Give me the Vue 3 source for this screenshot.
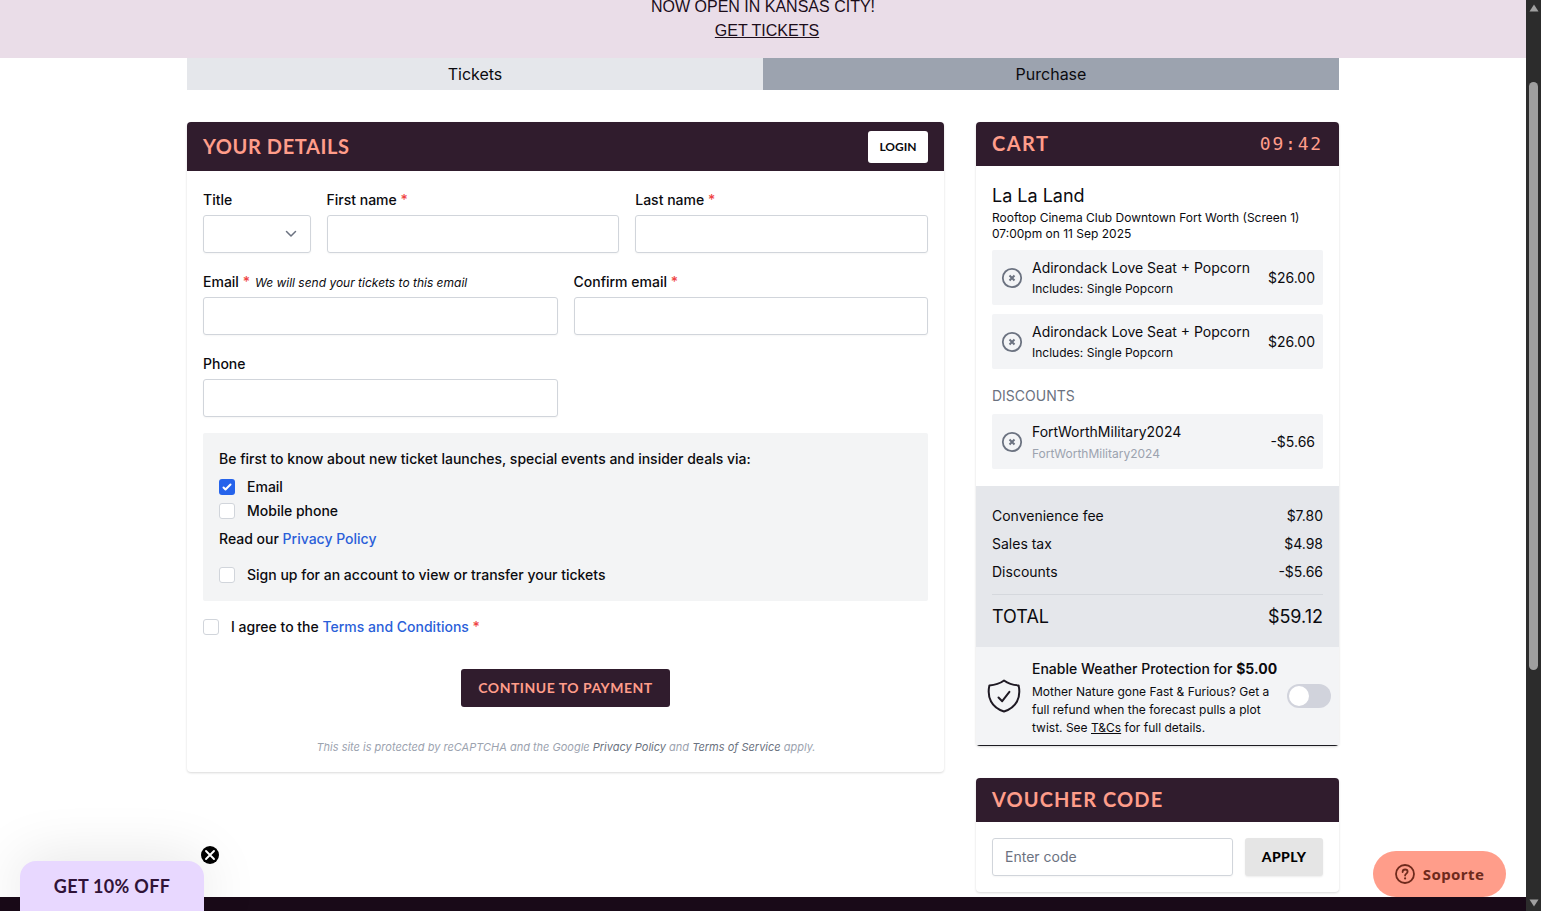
<template>
  <div class="window">
    <div class="page">
      <header class="banner">
        <span>NOW OPEN IN KANSAS CITY!</span>
        <a href="#">GET TICKETS</a>
      </header>

      <main class="container">
        <nav class="steps">
          <div class="step">Tickets</div>
          <div class="step active">Purchase</div>
        </nav>

        <div class="columns">
          <section class="card details">
            <div class="card-header details-header">
              <h2 class="heading-details">YOUR DETAILS</h2>
              <button class="btn-login">LOGIN</button>
            </div>

            <form class="form" @submit.prevent>
              <div class="fields">
                <div v-for="field in fields" :key="field.id" class="field" :class="field.size">
                  <label :for="field.id">
                    {{ field.label }}
                    <span v-if="field.required" class="required">*</span>
                    <em v-if="field.hint">{{ field.hint }}</em>
                  </label>
                  <div v-if="field.id === 'title'" :id="field.id" class="input select">
                    <svg width="12" height="8" viewBox="0 0 12 8" fill="none" stroke="#6b7280" stroke-width="1.5" stroke-linecap="round" stroke-linejoin="round">
                      <path d="M1.5 1.5 6 6l4.5-4.5" />
                    </svg>
                  </div>
                  <input v-else :id="field.id" v-model="field.value" class="input" type="text" />
                </div>
              </div>

              <div class="consent">
                <p>Be first to know about new ticket launches, special events and insider deals via:</p>
                <label class="check">
                  <span class="box checked">
                    <svg width="16" height="16" viewBox="0 0 16 16" fill="#fff">
                      <path d="M12.207 4.793a1 1 0 0 1 0 1.414l-5 5a1 1 0 0 1-1.414 0l-2-2a1 1 0 0 1 1.414-1.414L6.5 9.086l4.293-4.293a1 1 0 0 1 1.414 0z" />
                    </svg>
                  </span>
                  Email
                </label>
                <label class="check"><span class="box"></span>Mobile phone</label>
                <p class="policy">Read our <a href="#">Privacy Policy</a></p>
                <label class="check"><span class="box"></span>Sign up for an account to view or transfer your tickets</label>
              </div>

              <label class="check terms">
                <span class="box"></span>
                <span>I agree to the <a href="#">Terms and Conditions</a> <span class="required">*</span></span>
              </label>

              <button class="btn-continue">CONTINUE TO PAYMENT</button>

              <p class="recaptcha">
                This site is protected by reCAPTCHA and the Google <a href="#">Privacy Policy</a> and
                <a href="#">Terms of Service</a> apply.
              </p>
            </form>
          </section>

          <aside class="sidebar">
            <section class="card cart">
              <div class="card-header">
                <h2 class="heading-cart">CART</h2>
                <span class="timer">09:42</span>
              </div>

              <div class="cart-body">
                <h3>La La Land</h3>
                <p class="venue">Rooftop Cinema Club Downtown Fort Worth (Screen 1)</p>
                <p class="venue">07:00pm on 11 Sep 2025</p>

                <template v-for="item in items" :key="item.id">
                  <h4 v-if="item.discount">DISCOUNTS</h4>
                  <div class="item" :class="{ discount: item.discount }">
                    <svg class="remove" width="22" height="22" viewBox="0 0 22 22" fill="none" stroke="#6b7280">
                      <circle cx="11" cy="11" r="9.2" stroke-width="1.8" />
                      <path d="m8.500 8.500 5 5m0-5-5 5" stroke-width="2" />
                    </svg>
                    <div class="item-text">
                      <span>{{ item.name }}</span>
                      <small>{{ item.note }}</small>
                    </div>
                    <span class="price">{{ item.price }}</span>
                  </div>
                </template>
              </div>

              <div class="summary">
                <div v-for="row in summary" :key="row.label" class="summary-row">
                  <span>{{ row.label }}</span>
                  <span>{{ row.value }}</span>
                </div>
                <div class="total">
                  <span>TOTAL</span>
                  <span>$59.12</span>
                </div>
              </div>

              <div class="weather">
                <svg class="shield" width="34" height="34" viewBox="0 0 34 34" fill="none" stroke="#1f1a24" stroke-width="2" stroke-linecap="round" stroke-linejoin="round">
                  <path d="M17 1.5c4.2 3.1 9 4.6 14.6 4.9C34.2 18.5 29.5 28.5 17 32.5 4.5 28.5-.2 18.5 2.4 6.4 8 6.1 12.8 4.600 17 1.500z" />
                  <path d="m11.500 18.500 3.700 3.700 7.200-9.400" />
                </svg>
                <div class="weather-text">
                  <span class="weather-title">Enable Weather Protection for <b>$5.00</b></span>
                  <p>Mother Nature gone Fast &amp; Furious? Get a full refund when the forecast pulls a plot twist. See <a href="#">T&amp;Cs</a> for full details.</p>
                </div>
                <button class="toggle" aria-label="Enable Weather Protection"><span></span></button>
              </div>
            </section>

            <section class="card voucher">
              <div class="card-header">
                <h2 class="heading-voucher">VOUCHER CODE</h2>
              </div>
              <div class="voucher-body">
                <input v-model="code" class="input" type="text" placeholder="Enter code" />
                <button class="btn-apply">APPLY</button>
              </div>
            </section>
          </aside>
        </div>
      </main>

      <footer class="footer"></footer>

      <div class="promo">GET 10% OFF</div>
      <button class="promo-close" aria-label="Close">
        <svg width="18" height="18" viewBox="0 0 18 18" fill="none">
          <circle cx="9" cy="9" r="9" fill="#000" />
          <path d="m5 5 8 8m0-8-8 8" stroke="#fff" stroke-width="1.9" stroke-linecap="round" />
        </svg>
      </button>

      <button class="support">
        <svg width="20" height="20" viewBox="0 0 20 20" fill="none" stroke="#6e2a1c" stroke-width="1.8" stroke-linecap="round">
          <circle cx="10" cy="10" r="9" />
          <path d="M7.600 8c0-1.500 1.100-2.500 2.500-2.500s2.500.9 2.500 2.200c0 1.800-2.500 2-2.500 3.900" />
          <path d="M10.100 14.300v.1" stroke-width="2.100" />
        </svg>
        Soporte
      </button>
    </div>

    <div class="scrollbar">
      <svg width="10" height="8" viewBox="0 0 10 8"><path d="M5 0.500 9.500 7.500h-9z" fill="#a0a0a0" /></svg>
      <div class="thumb"></div>
      <svg width="10" height="8" viewBox="0 0 10 8"><path d="M5 7.500 9.500.5h-9z" fill="#a0a0a0" /></svg>
    </div>
  </div>
</template>

<script setup>
import { ref } from 'vue'

const code = ref('')

const fields = ref([
  { id: 'title', label: 'Title', size: 'small', value: '' },
  { id: 'first-name', label: 'First name', size: 'medium', required: true, value: '' },
  { id: 'last-name', label: 'Last name', size: 'medium', required: true, value: '' },
  { id: 'email', label: 'Email', size: 'half', required: true, hint: 'We will send your tickets to this email', value: '' },
  { id: 'confirm-email', label: 'Confirm email', size: 'half', required: true, value: '' },
  { id: 'phone', label: 'Phone', size: 'half', value: '' }
])

const items = [
  { id: 1, name: 'Adirondack Love Seat + Popcorn', note: 'Includes: Single Popcorn', price: '$26.00' },
  { id: 2, name: 'Adirondack Love Seat + Popcorn', note: 'Includes: Single Popcorn', price: '$26.00' },
  { id: 3, name: 'FortWorthMilitary2024', note: 'FortWorthMilitary2024', price: '-$5.66', discount: true }
]

const summary = [
  { label: 'Convenience fee', value: '$7.80' },
  { label: 'Sales tax', value: '$4.98' },
  { label: 'Discounts', value: '-$5.66' }
]
</script>

<style>
body {
  margin: 0;
  overflow: hidden;
}
</style>

<style scoped>
.window {
  --plum: #301c2d;
  --coral: #ff9d8a;
  --link: #2b5fd9;

  display: flex;
  width: 1541px;
  height: 911px;
  overflow: hidden;
  font-family: Inter, sans-serif;
  font-size: 14px;
  line-height: 20px;
  color: #0b0b0f;
}

.window *,
.window *::before {
  box-sizing: border-box;
}

h2,
h3,
h4,
p {
  margin: 0;
  font-weight: 400;
}

button {
  border: none;
  padding: 0;
  cursor: pointer;
}

.page {
  position: relative;
  display: flex;
  flex-direction: column;
  width: 1526px;
  height: 911px;
  background: #fff;
  overflow: hidden;
}

.banner {
  display: flex;
  flex-direction: column;
  justify-content: flex-end;
  align-items: center;
  flex: none;
  height: 58px;
  padding-bottom: 15px;
  background: #eadde8;
  font: 16px/24px "Liberation Sans", sans-serif;
  color: #1c0d1a;
}

.banner a {
  margin-left: 8px;
  color: inherit;
  text-underline-offset: 1px;
}

.container {
  flex: 1;
  min-height: 0;
  width: 1152px;
  margin: 0 auto;
}

.steps {
  display: flex;
  height: 32px;
  font-size: 16px;
  line-height: 32px;
  text-align: center;
}

.step {
  flex: 1;
  background: #e5e7eb;
}

.step.active {
  background: #9ca3af;
}

.columns {
  display: flex;
  align-items: flex-start;
  gap: 32px;
  margin-top: 32px;
}

.card {
  border-radius: 4px;
  background: #fff;
  box-shadow: 0 1px 3px rgba(0, 0, 0, 0.08), 0 1px 2px rgba(0, 0, 0, 0.08);
  overflow: hidden;
}

.card-header {
  display: flex;
  align-items: center;
  justify-content: space-between;
  height: 44px;
  padding: 0 16px;
  background: var(--plum);
  color: var(--coral);
}

.card-header h2 {
  padding-bottom: 2px;
  font: 700 20px/26px Lato, sans-serif;
  letter-spacing: 1.5px;
}

.card-header .heading-details {
  letter-spacing: 0.6px;
}

.card-header .heading-voucher {
  letter-spacing: 1.1px;
}

.details {
  width: 757px;
  height: 650px;
}

.details-header {
  height: 49px;
}

.btn-login {
  width: 60px;
  height: 32px;
  border-radius: 3px;
  background: #fff;
  font: 700 12px/32px Lato, sans-serif;
  color: #0b0b0f;
}

.form {
  display: flex;
  flex-direction: column;
  padding: 19px 16px 0;
  font-weight: 500;
}

.fields {
  display: grid;
  grid-template-columns: repeat(12, 1fr);
  gap: 19px 16px;
}

.small {
  grid-column: span 2;
}

.medium {
  grid-column: span 5;
}

.half {
  grid-column: span 6;
}

.field label {
  display: block;
  height: 20px;
  margin-bottom: 5px;
}

.field em {
  margin-left: 1px;
  padding-left: 4px;
  font-size: 12px;
  font-weight: 450;
}

.required {
  color: #ef4444;
}

.input {
  display: block;
  width: 100%;
  height: 38px;
  padding: 0 12px;
  border: 1px solid #d1d5db;
  border-radius: 3px;
  background: #fff;
  box-shadow: 0 1px 2px rgba(0, 0, 0, 0.04);
  font: 14px/20px Inter, sans-serif;
  outline: none;
}

.input::placeholder {
  color: #6b7280;
}

.select {
  display: flex;
  align-items: center;
  justify-content: flex-end;
  padding-right: 13px;
}

.consent {
  height: 168px;
  margin-top: 16px;
  padding: 16px;
  background: #f3f4f5;
  border-radius: 2px;
}

.consent p {
  font-weight: 500;
}

.check {
  display: flex;
  align-items: center;
  gap: 12px;
  height: 24px;
}

.consent p + .check {
  margin-top: 6px;
}

.consent .policy {
  margin-top: 6px;
}

.consent .policy + .check {
  margin-top: 14px;
}

.box {
  display: flex;
  width: 16px;
  height: 16px;
  border: 1px solid #d1d5db;
  border-radius: 3px;
  background: #fff;
}

.box.checked {
  border: none;
  background: #2563eb;
}

.form a {
  color: var(--link);
  text-decoration: none;
}

.terms {
  margin-top: 14px;
}

.btn-continue {
  align-self: center;
  width: 209px;
  height: 38px;
  margin-top: 30px;
  border-radius: 3px;
  background: var(--plum);
  color: var(--coral);
  font: 700 14px/38px Lato, sans-serif;
  letter-spacing: 0.5px;
}

.form .recaptcha {
  margin-top: 30px;
  padding-left: 1px;
  font-size: 11px;
  font-style: italic;
  text-align: center;
  color: #9ca3af;
}

.form .recaptcha a {
  color: #6b7280;
}

.sidebar {
  display: flex;
  flex-direction: column;
  gap: 32px;
  width: 363px;
}

.timer {
  font: 18px/28px "DejaVu Sans Mono", monospace;
  letter-spacing: 1.8px;
}

.cart {
  height: 624px;
}

.cart-body {
  height: 320px;
  padding: 16px 16px 0;
}

.cart-body h3 {
  font-size: 18px;
  line-height: 28px;
}

.venue {
  font-size: 12px;
  line-height: 16px;
}

.item {
  display: flex;
  align-items: center;
  height: 55px;
  margin-top: 9px;
  padding: 0 8px 0 9px;
  background: #f3f4f6;
  border-radius: 2px;
}

.venue + .item {
  margin-top: 8px;
}

.item-text {
  display: flex;
  flex-direction: column;
  flex: 1;
  margin-left: 9px;
}

.item-text small {
  height: 20px;
  padding-top: 1px;
  font-size: 12px;
}

.discount small {
  padding-top: 2px;
  color: #9ca3af;
}

.cart-body h4 {
  margin-top: 17px;
  color: #6b7280;
}

.cart-body h4 + .item {
  margin-top: 8px;
}

.summary {
  height: 161px;
  padding: 16px 16px 0;
  background: #e5e7eb;
}

.summary-row {
  display: flex;
  justify-content: space-between;
  line-height: 28px;
}

.total {
  display: flex;
  justify-content: space-between;
  margin-top: 8px;
  padding-top: 8px;
  border-top: 1px solid #d5d8dd;
  font-size: 18px;
  line-height: 28px;
}

.weather {
  display: flex;
  align-items: center;
  height: 99px;
  padding: 0 8px 0 11px;
  border-bottom: 1px solid #1c1c22;
  background: #f3f4f6;
}

.weather-text {
  flex: 1;
  margin-left: 11px;
  padding-top: 3px;
}

.weather-title {
  font-weight: 500;
  white-space: nowrap;
}

.weather-text p {
  width: 245px;
  margin-top: 4px;
  font-size: 12px;
  line-height: 18px;
}

.weather a {
  color: inherit;
}

.shield {
  flex: none;
}

.toggle {
  flex: none;
  width: 44px;
  height: 24px;
  padding: 2px;
  border-radius: 12px;
  background: #d1d3dc;
}

.toggle span {
  display: block;
  width: 20px;
  height: 20px;
  border-radius: 50%;
  background: #fff;
}

.voucher {
  height: 114px;
}

.voucher-body {
  display: flex;
  gap: 12px;
  padding: 16px;
}

.voucher-body .input {
  flex: 1;
  min-width: 0;
  padding-bottom: 2px;
}

.btn-apply {
  width: 78px;
  height: 38px;
  border-radius: 3px;
  background: #e5e5e5;
  box-shadow: 0 1px 2px rgba(0, 0, 0, 0.08);
  font: 900 14px/38px Lato, sans-serif;
  letter-spacing: 0.4px;
  color: #000;
}

.footer {
  flex: none;
  height: 14px;
  background: #190a18;
}

/* floating widgets pinned to the bottom of the viewport */
.promo {
  position: absolute;
  left: 20px;
  bottom: 0;
  width: 184px;
  height: 50px;
  border-radius: 16px 16px 0 0;
  background: #e8d8ff;
  box-shadow: 0 0 60px rgba(0, 0, 0, 0.12);
  font: 700 18px/51px Lato, sans-serif;
  letter-spacing: 0.3px;
  text-align: center;
  color: #301338;
}

.promo-close {
  position: absolute;
  left: 201px;
  bottom: 47px;
  display: flex;
  background: none;
}

.support {
  position: absolute;
  right: 20px;
  bottom: 14px;
  display: flex;
  align-items: center;
  justify-content: center;
  gap: 8px;
  width: 133px;
  height: 46px;
  border-radius: 23px;
  background: #ff9d8a;
  font: 700 15px/46px "Noto Sans", sans-serif;
  letter-spacing: 0.4px;
  color: #6e2a1c;
}

.scrollbar {
  display: flex;
  flex-direction: column;
  align-items: center;
  justify-content: space-between;
  width: 15px;
  padding: 4px 0;
  background: #2c2c2c;
}

.thumb {
  width: 9px;
  height: 588px;
  margin: 70px 0 auto;
  border-radius: 5px;
  background: #9f9f9f;
}
</style>
